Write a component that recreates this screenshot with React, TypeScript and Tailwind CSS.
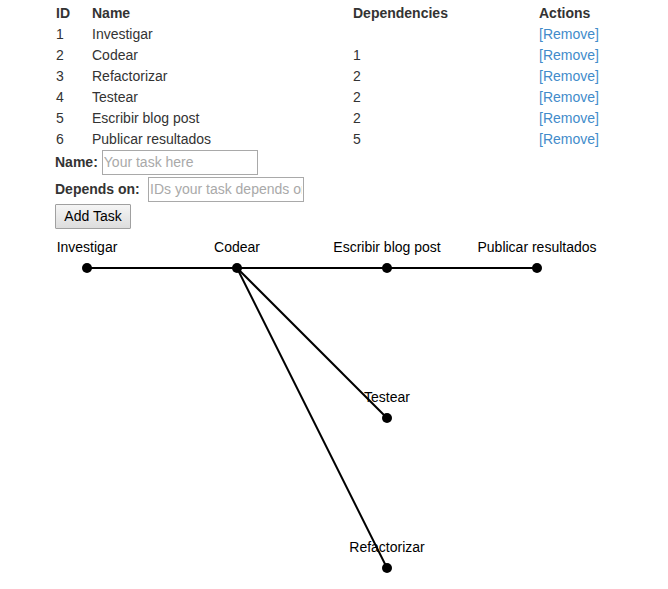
import { useState } from "react";
import type { FormEvent, MouseEvent } from "react";

type Task = { id: number; name: string; deps: number[]; x: number; y: number };

const initialTasks: Task[] = [
  { id: 1, name: "Investigar", deps: [], x: 32, y: 37 },
  { id: 2, name: "Codear", deps: [1], x: 182, y: 37 },
  { id: 3, name: "Refactorizar", deps: [2], x: 332, y: 337 },
  { id: 4, name: "Testear", deps: [2], x: 332, y: 187 },
  { id: 5, name: "Escribir blog post", deps: [2], x: 332, y: 37 },
  { id: 6, name: "Publicar resultados", deps: [5], x: 482, y: 37 },
];

function TaskTable({ tasks, onRemove }: { tasks: Task[]; onRemove: (id: number) => void }) {
  const remove = (id: number) => (event: MouseEvent) => {
    event.preventDefault();
    onRemove(id);
  };
  return (
    <table className="w-full table-fixed border-collapse text-left">
      <thead>
        <tr className="h-[21px]">
          <th className="w-9 px-px py-0">ID</th>
          <th className="px-px py-0">Name</th>
          <th className="w-1/3 px-px py-0">Dependencies</th>
          <th className="w-[75px] px-px py-0">Actions</th>
        </tr>
      </thead>
      <tbody>
        {tasks.map((task) => (
          <tr key={task.id} className="h-[21px]">
            <td className="px-px py-0">{task.id}</td>
            <td className="px-px py-0">{task.name}</td>
            <td className="px-px py-0">{task.deps.join(", ")}</td>
            <td className="px-px py-0">
              <a href="#" onClick={remove(task.id)} className="text-[#428bca]">
                [Remove]
              </a>
            </td>
          </tr>
        ))}
      </tbody>
    </table>
  );
}

function TaskForm({ onAdd }: { onAdd: (name: string, deps: number[]) => void }) {
  const [name, setName] = useState("");
  const [deps, setDeps] = useState("");
  const submit = (event: FormEvent) => {
    event.preventDefault();
    if (!name) return;
    onAdd(name, deps.split(",").map(Number).filter(Boolean));
    setName("");
    setDeps("");
  };
  const field = "h-[25px] w-[156px] border border-[#a9a9a9] bg-white px-px pb-0.5 placeholder:text-[#a9a9a9]";
  return (
    <form onSubmit={submit} className="flex flex-col items-start gap-0.5 pt-px">
      <div className="flex items-center gap-1">
        <label htmlFor="task-name" className="pb-0.5 font-bold">Name:</label>
        <input id="task-name" className={field} placeholder="Your task here" value={name} onChange={(e) => setName(e.target.value)} />
      </div>
      <div className="flex items-center gap-1">
        <label htmlFor="task-deps" className="min-w-[89px] pb-0.5 font-bold">Depends on:</label>
        <input id="task-deps" className={field} placeholder="IDs your task depends on" value={deps} onChange={(e) => setDeps(e.target.value)} />
      </div>
      <button type="submit" className="h-[25px] w-19 rounded-[1px] border border-[#a0a0a0] bg-linear-to-b from-[#f5f5f5] to-[#dddddd] pb-0.5 text-black">
        Add Task
      </button>
    </form>
  );
}

function TaskGraph({ tasks }: { tasks: Task[] }) {
  return (
    <svg width="550" height="350" className="block overflow-visible" role="img" aria-label="Task dependency graph">
      {tasks.flatMap((task) =>
        task.deps.map((dep) => {
          const from = tasks.find((t) => t.id === dep);
          return from ? (
            <line key={`${dep}-${task.id}`} x1={from.x} y1={from.y} x2={task.x} y2={task.y} stroke="black" strokeWidth="2" />
          ) : null;
        }),
      )}
      {tasks.map((task) => (
        <g key={task.id}>
          <circle cx={task.x} cy={task.y} r="5" />
          <text x={task.x} y={task.y - 16} textAnchor="middle">{task.name}</text>
        </g>
      ))}
    </svg>
  );
}

export default function App() {
  const [tasks, setTasks] = useState(initialTasks);
  const add = (name: string, deps: number[]) =>
    setTasks((list) => {
      const parent = list.find((t) => t.id === deps[0]);
      const x = parent ? parent.x + 150 : 32;
      const y = 37 + 150 * list.filter((t) => t.x === x).length;
      return [...list, { id: Math.max(0, ...list.map((t) => t.id)) + 1, name, deps, x, y }];
    });
  return (
    <main className="bg-white px-[55px] pt-0.5 font-['Liberation_Sans',Arial,sans-serif] text-sm leading-5 text-[#333333]">
      <TaskTable tasks={tasks} onRemove={(id) => setTasks((list) => list.filter((t) => t.id !== id))} />
      <TaskForm onAdd={add} />
      <div className="pt-0.5 text-black">
        <TaskGraph tasks={tasks} />
      </div>
    </main>
  );
}
